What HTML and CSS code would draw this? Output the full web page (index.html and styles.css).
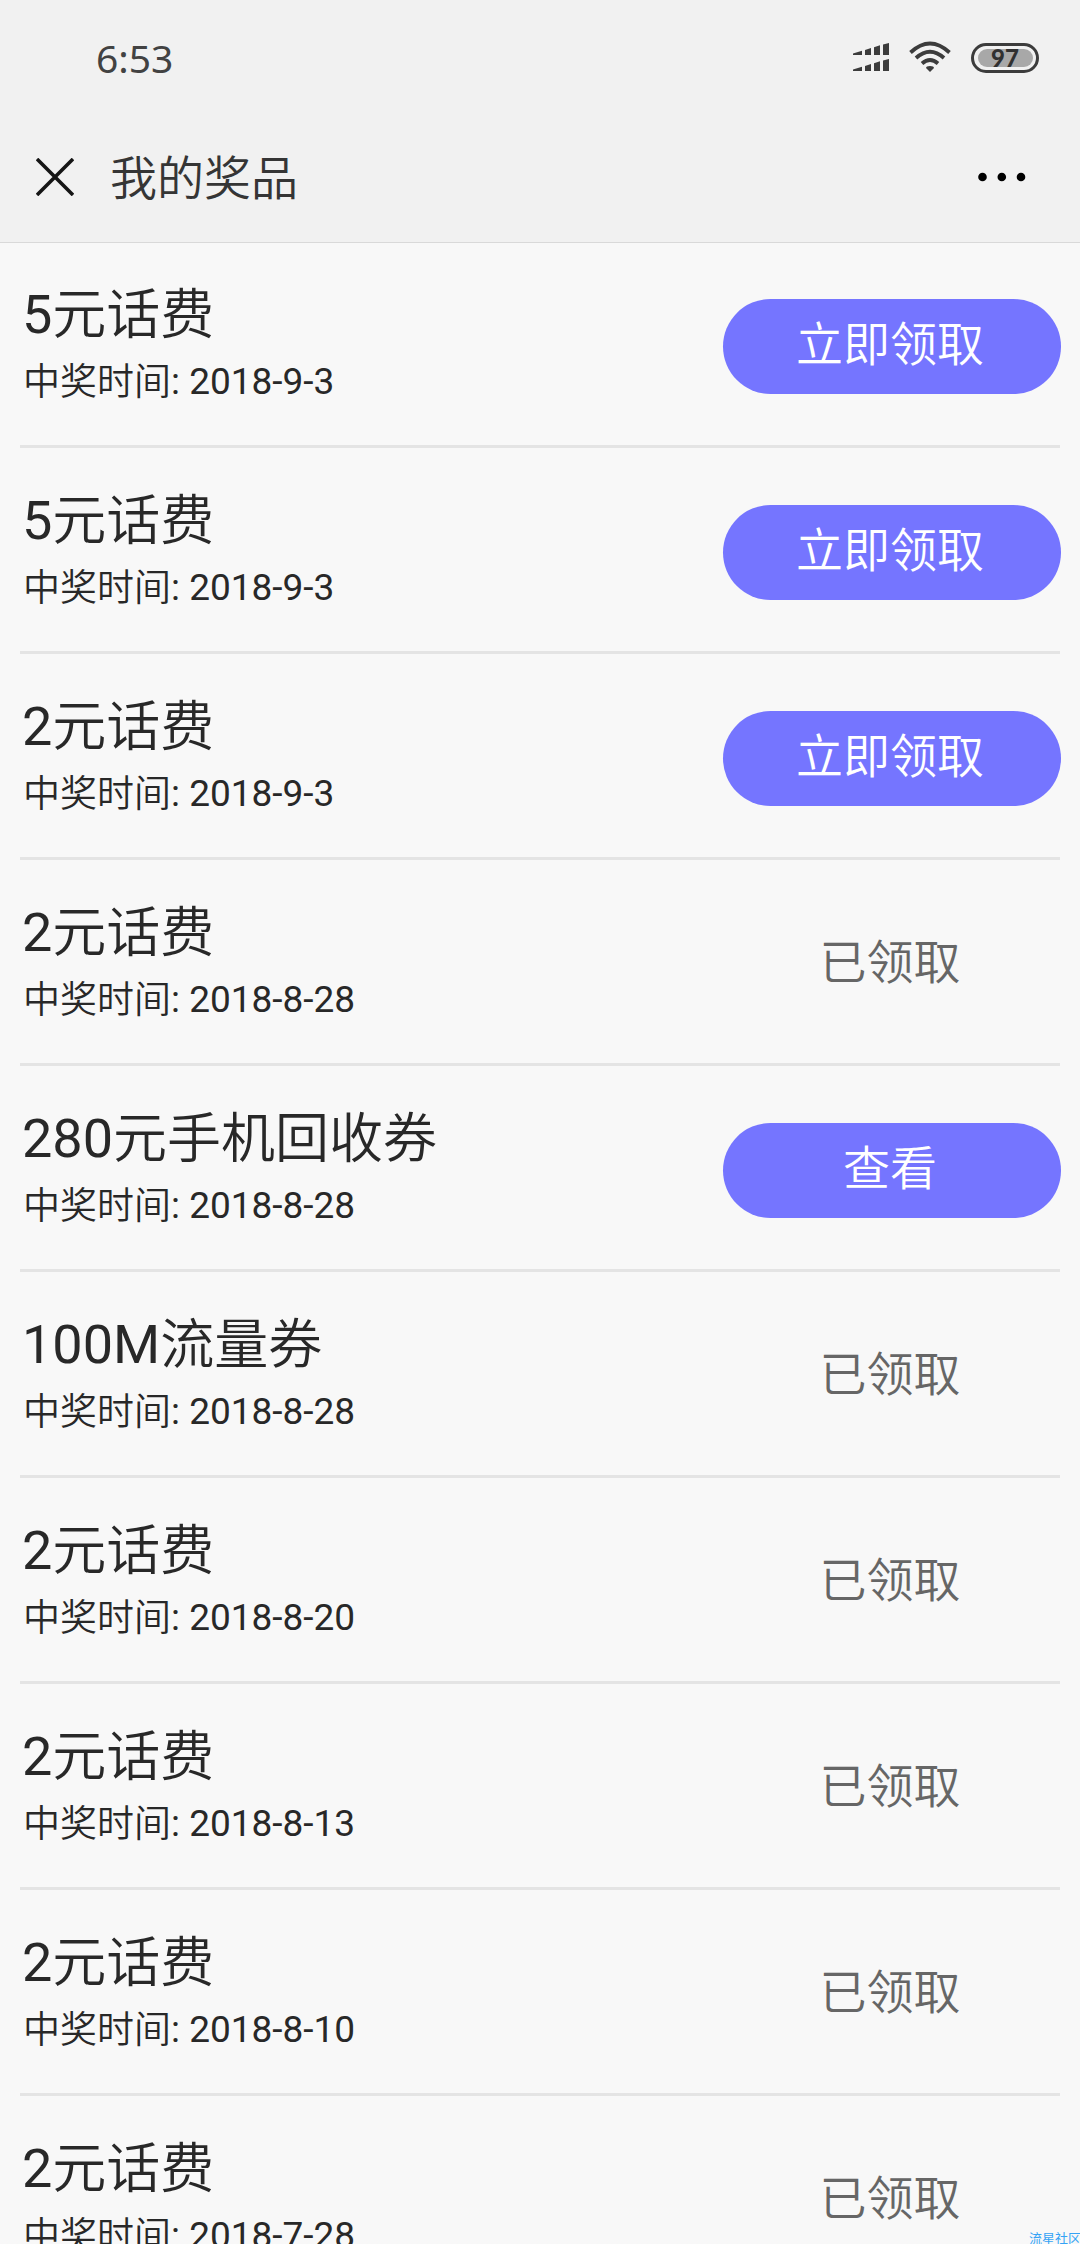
FILE: index.html
```html
<!DOCTYPE html>
<html lang="zh-CN">
<head>
<meta charset="utf-8">
<title>我的奖品</title>
<link rel="stylesheet" href="styles.css">
</head>
<body>
<header class="top">
  <div class="status">
    <span class="clock">6:53</span>
    <svg class="status-icons" width="188" height="34" viewBox="0 0 188 34">
      <g fill="#3c3c3c">
        <path d="M0 10.4 9 7.8V12H0zM12 7l6-2V12h-6zM21 4.2 27 2.2V12h-6zM30 1.5 36 0V12h-6z"/>
        <path d="M0 26.4 9 23.8V28H0zM12 23l6-2V28h-6zM21 20.2 27 18.2V28h-6zM30 17.5 36 16V28h-6z"/>
        <path d="M77 29l-4-4q0-2 4-2t4 2z"/>
      </g>
      <g fill="none" stroke="#3c3c3c" stroke-width="3.8">
        <path d="M57.500 9.500Q77-8.500 96.500 9.500M63 15Q77 2.500 91 15M69 20.500Q77 13.500 85 20.500"/>
      </g>
      <rect x="119.500" y="1.500" width="65" height="27" rx="13.500" fill="none" stroke="#3c3c3c" stroke-width="3"/>
      <rect x="125" y="6" width="55" height="18" rx="9" fill="#a8a8a8"/>
      <text x="152" y="23.500" class="battery" text-anchor="middle">97</text>
    </svg>
  </div>
  <nav class="nav">
    <svg class="close" width="38" height="38" viewBox="0 0 38 38"><path d="M1 1 37 37M37 1 1 37" stroke="#151515" stroke-width="3.600"/></svg>
    <h1 class="heading">我的奖品</h1>
    <svg class="more" width="48" height="10" viewBox="0 0 48 10"><circle cx="4.500" cy="5" r="4.300"/><circle cx="23.800" cy="5" r="4.300"/><circle cx="43" cy="5" r="4.300"/></svg>
  </nav>
</header>
<main class="list">
  <section class="row"><div><h2 class="name">5<span class="han">元话费</span></h2><p class="date"><span class="han">中奖时间</span>: 2018-9-3</p></div><button class="btn">立即领取</button></section>
  <section class="row"><div><h2 class="name">5<span class="han">元话费</span></h2><p class="date"><span class="han">中奖时间</span>: 2018-9-3</p></div><button class="btn">立即领取</button></section>
  <section class="row"><div><h2 class="name">2<span class="han">元话费</span></h2><p class="date"><span class="han">中奖时间</span>: 2018-9-3</p></div><button class="btn">立即领取</button></section>
  <section class="row"><div><h2 class="name">2<span class="han">元话费</span></h2><p class="date"><span class="han">中奖时间</span>: 2018-8-28</p></div><span class="btn done">已领取</span></section>
  <section class="row"><div><h2 class="name">280<span class="han">元手机回收券</span></h2><p class="date"><span class="han">中奖时间</span>: 2018-8-28</p></div><button class="btn">查看</button></section>
  <section class="row"><div><h2 class="name">100M<span class="han">流量券</span></h2><p class="date"><span class="han">中奖时间</span>: 2018-8-28</p></div><span class="btn done">已领取</span></section>
  <section class="row"><div><h2 class="name">2<span class="han">元话费</span></h2><p class="date"><span class="han">中奖时间</span>: 2018-8-20</p></div><span class="btn done">已领取</span></section>
  <section class="row"><div><h2 class="name">2<span class="han">元话费</span></h2><p class="date"><span class="han">中奖时间</span>: 2018-8-13</p></div><span class="btn done">已领取</span></section>
  <section class="row"><div><h2 class="name">2<span class="han">元话费</span></h2><p class="date"><span class="han">中奖时间</span>: 2018-8-10</p></div><span class="btn done">已领取</span></section>
  <section class="row"><div><h2 class="name">2<span class="han">元话费</span></h2><p class="date"><span class="han">中奖时间</span>: 2018-7-28</p></div><span class="btn done">已领取</span></section>
</main>
<div class="mark">流星社区</div>
</body>
</html>
```
FILE: styles.css
```css
* { box-sizing: border-box; margin: 0; padding: 0; }
body {
  position: relative;
  height: 2244px;
  overflow: hidden;
  background: #f8f8f8;
  color: #282828;
  font-family: Roboto, "Noto Sans CJK SC", sans-serif;
}
.top { height: 243px; background: #f1f1f1; border-bottom: 1px solid #d9d9d9; }
.status { display: flex; justify-content: space-between; height: 117px; padding: 0 39px 0 96px; }
.clock { margin-top: 34px; font: 39px/48px "Noto Sans", sans-serif; color: #424242; }
.status-icons { margin-top: 43px; overflow: visible; }
.battery { font: 900 24px Lato, sans-serif; fill: #303030; }
.nav { display: flex; align-items: center; height: 120px; padding: 0 54px 0 36px; }
.heading { margin: 3px 0 0 36px; font-size: 47px; line-height: 60px; font-weight: 350; color: #353535; }
.more { margin-left: auto; }
.list { margin-top: -1px; padding: 0 20px; }
.row {
  display: flex;
  justify-content: space-between;
  height: 206px;
  padding-top: 38px;
  border-bottom: 3px solid #e4e4e4;
}
.name { height: 70px; padding-left: 2px; font-size: 54px; line-height: 70px; font-weight: 400; }
.name .han { vertical-align: -1px; line-height: 1; }
.date { height: 62px; padding: 2px 0 0 3px; font-size: 37px; line-height: 60px; }
.date .han { vertical-align: -1px; line-height: 1; }
.han { font-weight: 350; }
.btn {
  display: block;
  width: 338px;
  height: 95px;
  margin: 19px -1px 0 0;
  padding: 1px 4px 5px 0;
  border: 0;
  border-radius: 48px;
  background: #7575ff;
  color: #fff;
  font: 350 47px/89px Roboto, "Noto Sans CJK SC", sans-serif;
  text-align: center;
}
.done { background: none; color: #666; }
.mark {
  position: absolute;
  right: -1px;
  bottom: -2px;
  color: #35a3f5;
  font: 13px/16px "Noto Sans CJK SC", sans-serif;
}
```
